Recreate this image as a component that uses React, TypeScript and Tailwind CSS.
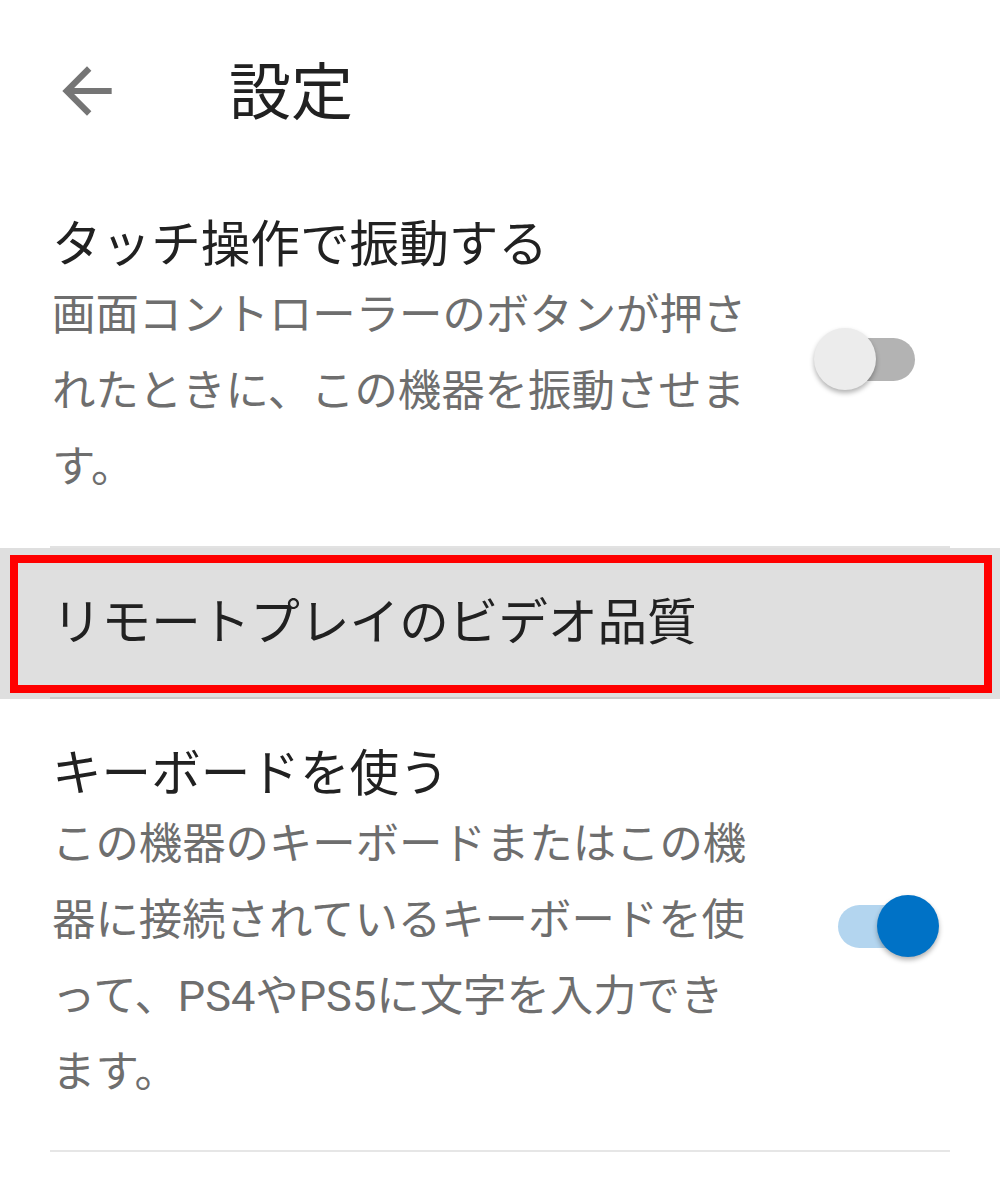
import React from "react";

function Switch({ on }: { on: boolean }) {
  return (
    <div className="relative w-[130px] h-[62px] shrink-0">
      <div
        className={
          on
            ? "absolute left-[26px] top-[10px] w-[77px] h-[43px] rounded-full bg-[#b3d5ef]"
            : "absolute left-[26px] top-[10px] w-[77px] h-[43px] rounded-full bg-[#b3b3b3]"
        }
      />
      <div
        className={
          on
            ? "absolute left-[65px] top-0 w-[62px] h-[62px] rounded-full bg-[#0072c6] shadow-[0_3px_5px_rgba(0,0,0,0.3)]"
            : "absolute left-[2px] top-0 w-[62px] h-[62px] rounded-full bg-[#ececec] shadow-[0_3px_5px_rgba(0,0,0,0.3)]"
        }
      />
    </div>
  );
}

export default function App() {
  return (
    <div
      className="w-[1000px] h-[1200px] bg-white overflow-hidden"
      style={{ fontFamily: "Roboto, 'Noto Sans CJK JP', sans-serif" }}
    >
      {/* Header */}
      <div className="flex items-center h-[182px]">
        <svg
          viewBox="0 0 24 24"
          className="ml-[50px] w-[74px] h-[74px]"
          fill="#757575"
        >
          <path d="M20 11H7.83l5.59-5.59L12 4l-8 8 8 8 1.41-1.41L7.83 13H20v-2z" />
        </svg>
        <div className="ml-[105px] mt-[6px] text-[62px] leading-none text-[#212121]">設定</div>
      </div>

      {/* Section 1 */}
      <div className="flex items-center pl-[52px] pt-[30px] pb-[40px]">
        <div className="w-[720px]">
          <div className="text-[49.6px] leading-[66px] text-[#212121]">タッチ操作で振動する</div>
          <div className="text-[43.4px] leading-[76px] text-[#6e6e6e]">
            画面コントローラーのボタンが押さ
            <br />
            れたときに、この機器を振動させま
            <br />
            す。
          </div>
        </div>
        <div className="ml-[40px]">
          <Switch on={false} />
        </div>
      </div>
      <div className="mx-[50px] h-[2px] bg-[#e2e2e2]" />

      {/* Highlighted row */}
      <div className="relative bg-[#dfdfdf]">
        <div className="flex items-center h-[149px] pl-[52px]">
          <div className="text-[49.6px] leading-[66px] text-[#212121]">リモートプレイのビデオ品質</div>
        </div>
        <div className="mx-[50px] h-[2px] bg-[#c9c9c9]" />
        <div className="absolute left-[10px] top-[7px] w-[982px] h-[138px] border-[8px] border-[#ff0000]" />
      </div>

      {/* Section 3 */}
      <div className="flex items-center pl-[52px] pt-[42px] pb-[39px]">
        <div className="w-[720px]">
          <div className="text-[49.6px] leading-[66px] text-[#212121]">キーボードを使う</div>
          <div className="text-[43.4px] leading-[76px] text-[#6e6e6e]">
            この機器のキーボードまたはこの機
            <br />
            器に接続されているキーボードを使
            <br />
            って、PS4やPS5に文字を入力でき
            <br />
            ます。
          </div>
        </div>
        <div className="ml-[40px]">
          <Switch on={true} />
        </div>
      </div>
      <div className="mx-[50px] h-[2px] bg-[#e6e6e6]" />
    </div>
  );
}
